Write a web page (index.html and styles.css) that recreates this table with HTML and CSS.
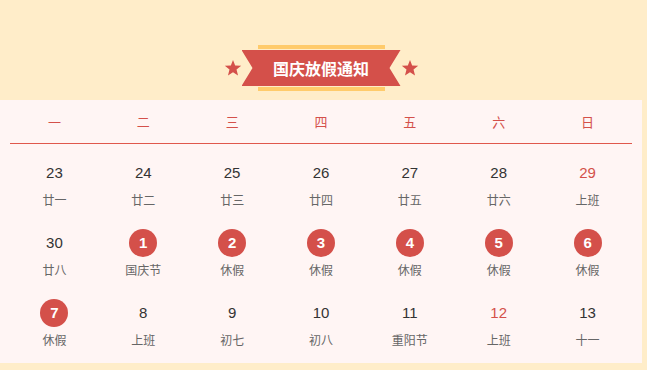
FILE: index.html
```html
<!DOCTYPE html>
<html lang="zh-CN">
<head>
<meta charset="utf-8">
<link rel="stylesheet" href="styles.css">
</head>
<body>
<div class="page">
  <header class="top">
    <div class="banner">
      <svg class="star" viewBox="0 0 20 20" width="18" height="18"><polygon points="10,1 12.4,7.3 19.1,7.6 13.9,11.8 15.6,18.3 10,14.6 4.4,18.3 6.1,11.8 0.9,7.6 7.6,7.3" fill="#d4504a"/></svg>
      <div class="ribbon-wrap">
        <div class="bar"></div>
        <div class="ribbon">国庆放假通知</div>
        <div class="bar"></div>
      </div>
      <svg class="star" viewBox="0 0 20 20" width="18" height="18"><polygon points="10,1 12.4,7.3 19.1,7.6 13.9,11.8 15.6,18.3 10,14.6 4.4,18.3 6.1,11.8 0.9,7.6 7.6,7.3" fill="#d4504a"/></svg>
    </div>
  </header>
  <section class="panel">
    <div class="week">
      <span>一</span><span>二</span><span>三</span><span>四</span><span>五</span><span>六</span><span>日</span>
    </div>
    <div class="days">
      <div class="cell"><span class="num">23</span><span class="lab">廿一</span></div>
      <div class="cell"><span class="num">24</span><span class="lab">廿二</span></div>
      <div class="cell"><span class="num">25</span><span class="lab">廿三</span></div>
      <div class="cell"><span class="num">26</span><span class="lab">廿四</span></div>
      <div class="cell"><span class="num">27</span><span class="lab">廿五</span></div>
      <div class="cell"><span class="num">28</span><span class="lab">廿六</span></div>
      <div class="cell"><span class="num work">29</span><span class="lab">上班</span></div>

      <div class="cell"><span class="num">30</span><span class="lab">廿八</span></div>
      <div class="cell"><span class="num off">1</span><span class="lab">国庆节</span></div>
      <div class="cell"><span class="num off">2</span><span class="lab">休假</span></div>
      <div class="cell"><span class="num off">3</span><span class="lab">休假</span></div>
      <div class="cell"><span class="num off">4</span><span class="lab">休假</span></div>
      <div class="cell"><span class="num off">5</span><span class="lab">休假</span></div>
      <div class="cell"><span class="num off">6</span><span class="lab">休假</span></div>

      <div class="cell"><span class="num off">7</span><span class="lab">休假</span></div>
      <div class="cell"><span class="num">8</span><span class="lab">上班</span></div>
      <div class="cell"><span class="num">9</span><span class="lab">初七</span></div>
      <div class="cell"><span class="num">10</span><span class="lab">初八</span></div>
      <div class="cell"><span class="num">11</span><span class="lab">重阳节</span></div>
      <div class="cell"><span class="num work">12</span><span class="lab">上班</span></div>
      <div class="cell"><span class="num">13</span><span class="lab">十一</span></div>
    </div>
  </section>
</div>
</body>
</html>
```
FILE: styles.css
```css
html, body {
  margin: 0;
  padding: 0;
}
body {
  background: #ffedc9;
  font-family: "Liberation Sans", "Noto Sans CJK SC", sans-serif;
  width: 647px;
  height: 370px;
  overflow: hidden;
}
.page {
  width: 642px;
}
.top {
  height: 100px;
  box-sizing: border-box;
  padding-top: 45px;
}
.banner {
  display: flex;
  align-items: center;
  justify-content: center;
}
.star {
  display: block;
  flex: none;
}
.ribbon-wrap {
  display: flex;
  flex-direction: column;
  align-items: center;
  gap: 1px;
}
.bar {
  width: 127px;
  height: 4px;
  background: #ffcb6b;
}
.ribbon {
  width: 159px;
  height: 36px;
  background: #d4504a;
  clip-path: polygon(0 0, 100% 0, calc(100% - 11px) 50%, 100% 100%, 0 100%, 11px 50%);
  color: #fff;
  font-family: "Noto Sans CJK SC", sans-serif;
  font-weight: 700;
  font-size: 16px;
  line-height: 36px;
  text-align: center;
}
.panel {
  background: #fff5f4;
  height: 263px;
  box-sizing: border-box;
  padding: 0 10px;
}
.week {
  display: grid;
  grid-template-columns: repeat(7, 1fr);
  height: 43px;
  align-items: center;
  border-bottom: 1px solid #e0574c;
  color: #d4504a;
  font-family: "Noto Sans CJK SC", sans-serif;
  font-size: 13px;
  text-align: center;
}
.days {
  display: grid;
  grid-template-columns: repeat(7, 1fr);
  row-gap: 21px;
  padding-top: 15px;
}
.cell {
  display: flex;
  flex-direction: column;
  align-items: center;
  gap: 5px;
}
.num {
  width: 28px;
  height: 28px;
  line-height: 28px;
  text-align: center;
  font-size: 15px;
  color: #333;
  border-radius: 50%;
}
.num.work {
  color: #d4504a;
}
.num.off {
  background: #d4504a;
  color: #fff;
  font-weight: 700;
}
.lab {
  font-family: "Noto Sans CJK SC", sans-serif;
  font-size: 12px;
  line-height: 16px;
  color: #666;
}
```
